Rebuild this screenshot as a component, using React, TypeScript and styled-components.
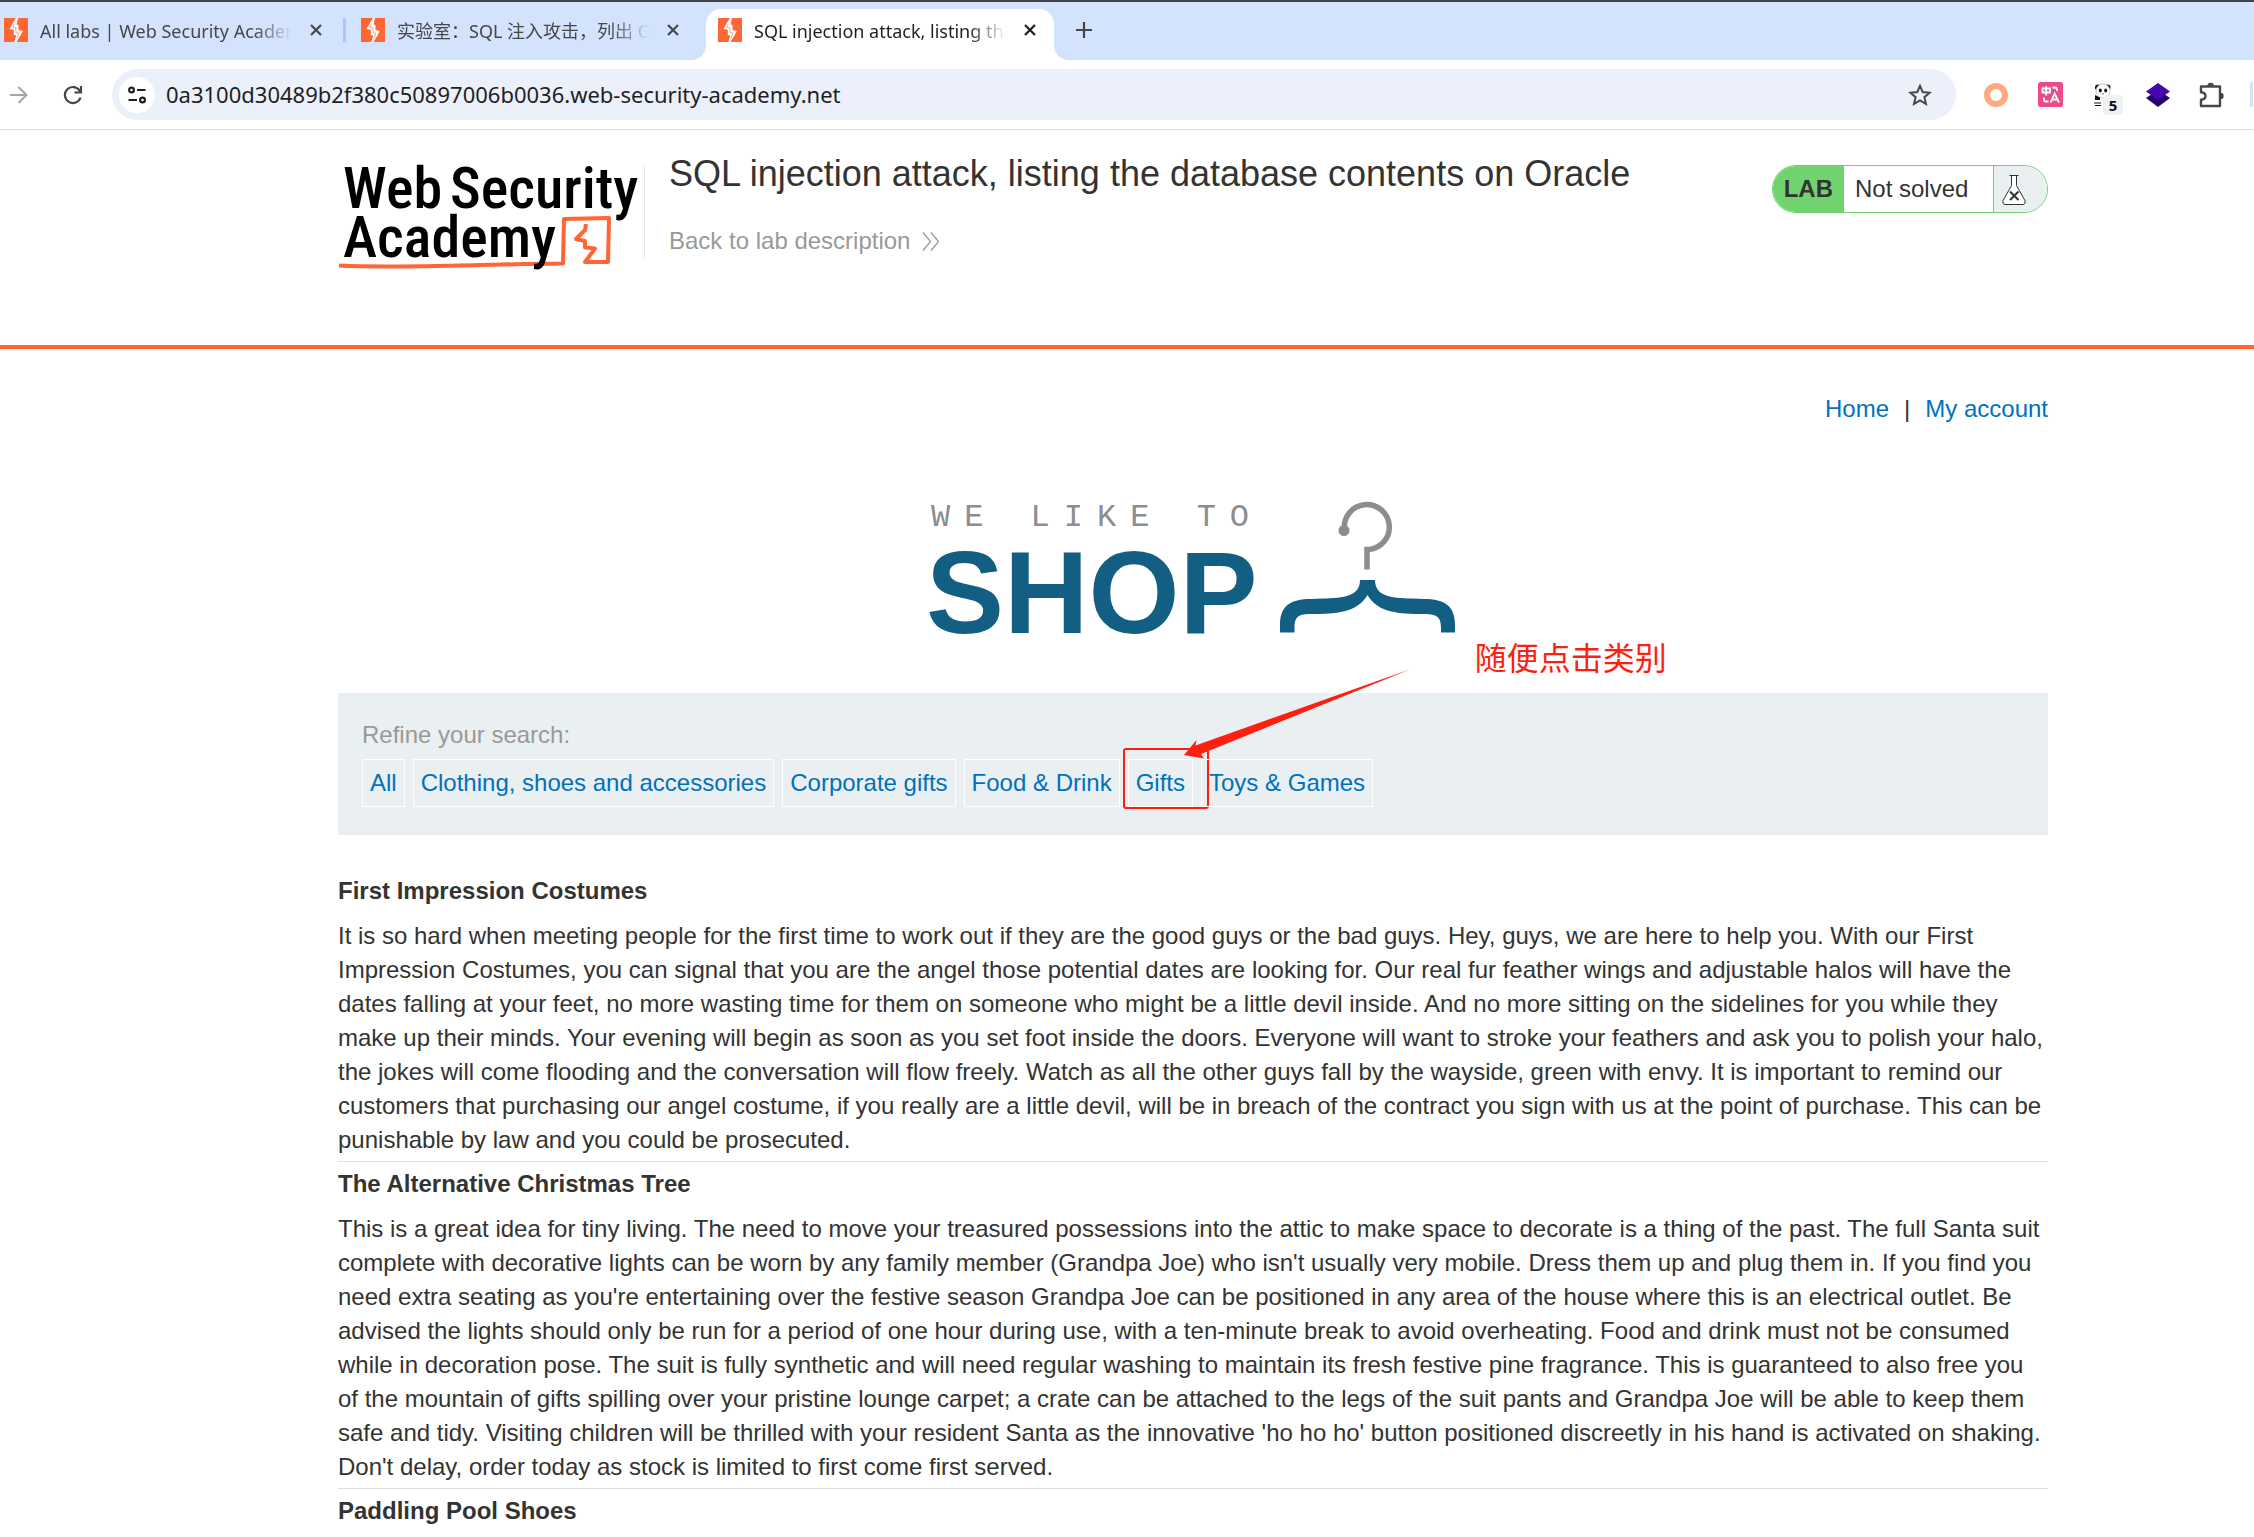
import React from "react";
import styled, { createGlobalStyle } from "styled-components";

const GlobalStyle = createGlobalStyle`
  *, *::before, *::after { box-sizing: border-box; }
  body {
    margin: 0;
    background: #fff;
    color: #333332;
    font-family: "Liberation Sans", Arial, "Noto Sans CJK SC", sans-serif;
    font-size: 24px;
    line-height: 34px;
  }
  h1, h2, p, ul { margin: 0; padding: 0; }
  button {
    margin: 0;
    padding: 0;
    border: 0;
    background: none;
    color: inherit;
    font: inherit;
    cursor: pointer;
  }
  svg { display: block; }
`;

const uiFont = `"Noto Sans", "Noto Sans CJK SC", sans-serif`;

/* ---------- Browser chrome ---------- */

const TabStrip = styled.div`
  display: flex;
  align-items: flex-end;
  height: 60px;
  border-top: 2px solid #404145;
  background: #d3e2fd;
  overflow: hidden;
`;

const Tab = styled.div<{ $active?: boolean; $clipped?: boolean }>`
  position: relative;
  display: flex;
  align-items: center;
  flex: none;
  width: ${(p) => (p.$clipped ? 340 : 348)}px;
  height: 51px;
  padding: 0 12px 9px ${(p) => (p.$clipped ? 4 : 12)}px;
  border-radius: 15px 15px 0 0;
  background: ${(p) => (p.$active ? "#fff" : "transparent")};
  color: ${(p) => (p.$active ? "#1f1f1f" : "#474747")};

  &::before,
  &::after {
    content: "";
    display: ${(p) => (p.$active ? "block" : "none")};
    position: absolute;
    bottom: 0;
    width: 15px;
    height: 15px;
  }
  &::before {
    right: 100%;
    background: radial-gradient(circle at 0 0, transparent 15px, #fff 15px);
  }
  &::after {
    left: 100%;
    background: radial-gradient(circle at 100% 0, transparent 15px, #fff 15px);
  }
`;

const TabTitle = styled.button`
  flex: 1;
  min-width: 0;
  margin: 2px 12px 0 12px;
  overflow: hidden;
  text-align: left;
  white-space: nowrap;
  font: 18px/26px ${uiFont};
  mask-image: linear-gradient(to right, #000 85%, transparent);
`;

const TabGap = styled.span<{ $line?: boolean }>`
  flex: none;
  width: 3px;
  height: 24px;
  margin: 0 3px 18px;
  background: ${(p) => (p.$line ? "#a8c7fa" : "transparent")};
`;

const CloseButton = styled.button`
  display: grid;
  place-items: center;
  width: 24px;
  height: 24px;
`;

const NewTabButton = styled.button`
  display: grid;
  place-items: center;
  width: 36px;
  height: 36px;
  margin: 0 0 12px 12px;
  color: #474747;
`;

const Toolbar = styled.div`
  display: flex;
  align-items: center;
  height: 70px;
  padding-left: 6px;
  border-bottom: 1px solid #dddddd;
  overflow: hidden;
`;

const ToolButton = styled.button<{ $muted?: boolean }>`
  display: grid;
  place-items: center;
  flex: none;
  width: 26px;
  height: 26px;
  color: ${(p) => (p.$muted ? "#a5a5a5" : "#474747")};
`;

const ReloadButton = styled(ToolButton)`
  margin: 0 26px 0 28px;
`;

const AddressBar = styled.div`
  display: flex;
  align-items: center;
  flex: 1;
  min-width: 0;
  height: 51px;
  padding: 0 23px 0 7px;
  border-radius: 26px;
  background: #ebf0fa;
`;

const SiteInfo = styled.button`
  display: grid;
  place-items: center;
  flex: none;
  width: 36px;
  height: 36px;
  border-radius: 50%;
  background: #fff;
`;

const AddressInput = styled.input`
  flex: 1;
  min-width: 0;
  margin: 0 11px;
  padding: 0 0 2px;
  border: 0;
  outline: 0;
  background: none;
  color: #1f1f1f;
  font: 22px/30px ${uiFont};
`;

const Extensions = styled.div`
  display: flex;
  align-items: center;
  flex: none;
  gap: 28px;
  padding: 0 1px 0 27px;
`;

const ExtensionDivider = styled.span`
  width: 3px;
  height: 25px;
  margin-left: -3px;
  background: #d3e3fd;
`;

const BadgedExtension = styled(ToolButton)`
  position: relative;
`;

const CountBadge = styled.span`
  position: absolute;
  left: 12px;
  top: 13px;
  width: 20px;
  height: 20px;
  border-radius: 4px;
  background: #f1f1f1;
  color: #111;
  text-align: center;
  font: 700 15px/20px ${uiFont};
`;

/* ---------- Page ---------- */

const Container = styled.div`
  max-width: 1710px;
  margin: 0 206px 0 auto;
`;

const Header = styled.header`
  border-bottom: 4px solid #ff6633;
`;

const HeaderRow = styled(Container)`
  display: flex;
  align-items: flex-start;
  padding: 23px 0 87px;
`;

const LogoLink = styled.a`
  flex: none;
  margin-top: 12px;
  padding-right: 6px;
  border-right: 1px solid #e5e5e5;
`;

const TitleBlock = styled.div`
  flex: 1;
  padding-left: 24px;
`;

const Title = styled.h1`
  margin-bottom: 29px;
  font-size: 36px;
  line-height: 42px;
  font-weight: 400;
`;

const BackLink = styled.a`
  display: inline-flex;
  align-items: center;
  gap: 12px;
  color: #999;
  text-decoration: none;
`;

const Badge = styled.div`
  display: flex;
  flex: none;
  height: 48px;
  margin-top: 12px;
  border: 1px solid #71d36f;
  border-radius: 24px;
  overflow: hidden;
  line-height: 46px;
`;

const BadgeName = styled.strong`
  padding: 0 11px;
  background: #71d36f;
`;

const BadgeStatus = styled.span`
  width: 149px;
  padding-left: 11px;
`;

const BadgeIcon = styled.span`
  width: 54px;
  padding: 8px 0 0 8px;
  border-left: 1px solid #71d36f;
  background: #eaeff2;
`;

const TopNav = styled.nav`
  display: flex;
  justify-content: flex-end;
  gap: 15px;
  padding-top: 43px;
`;

const Link = styled.a`
  color: #0071bd;
  text-decoration: none;
`;

const Banner = styled.section`
  display: flex;
  justify-content: center;
  padding: 77px 0 60px;
`;

const Filters = styled.section`
  padding: 25px 24px 28px;
  background: #eaeff2;
`;

const FilterLabel = styled.p`
  margin-bottom: 7px;
  color: #999;
`;

const FilterList = styled.ul`
  display: flex;
  gap: 8px;
  list-style: none;
`;

const FilterItem = styled.li`
  position: relative;
`;

const FilterLink = styled(Link)`
  display: block;
  padding: 6px 7px;
  border: 1px solid #fff;
`;

const HighlightBox = styled.span`
  position: absolute;
  left: -5px;
  top: -11px;
  width: 86px;
  height: 61px;
  border: 2px solid #ff1f10;
  border-radius: 3px;
  pointer-events: none;
`;

const ArrowMark = styled.svg`
  position: absolute;
  left: 56px;
  top: -91px;
  pointer-events: none;
`;

const NoteText = styled.span`
  position: absolute;
  left: 347px;
  top: -125px;
  color: #ff1f10;
  white-space: nowrap;
  font: 32px/44px "Noto Sans CJK SC", sans-serif;
`;

const Articles = styled.main`
  padding-top: 39px;
`;

const Article = styled.article`
  margin-bottom: 5px;
  padding-bottom: 4px;
  border-bottom: 1px solid #e0e0e0;

  &:last-child { border-bottom: 0; }
`;

const ArticleTitle = styled.h2`
  margin-bottom: 11px;
  font-size: 24px;
  line-height: 34px;
`;

/* ---------- Drawings ---------- */

const FaviconSvg = styled.svg`
  flex: none;
`;

const Favicon = () => (
  <FaviconSvg width="24" height="24" viewBox="0 0 24 24">
    <rect width="24" height="24" fill="#ff6633" />
    <path
      d="M11.8 0H14L12.600 6.500 14.500 7V12L19 13 12.500 24H10.300L12.300 17.500 9.800 17V11.800L5.500 11Z"
      fill="#fff"
    />
    <path d="M10.500 5.500 8.800 9.200 12 10V14.700L15 15.300 13 20" fill="none" stroke="#ff6633" strokeWidth=".6" />
  </FaviconSvg>
);

const Cross = () => (
  <svg width="12" height="12" viewBox="0 0 12 12" stroke="currentColor" strokeWidth="2.2">
    <path d="M1 1 11 11M11 1 1 11" />
  </svg>
);

const AcademyLogo = () => (
  <svg width="300" height="93" viewBox="0 0 300 93" overflow="visible" role="img" aria-label="Web Security Academy">
    <path
      d="M1 100.500C60 103.500 130 99.500 225 98.500L226 54 271 53 270 97H247L257 83.500 247 82.500V76L238 74 247 65 248 59"
      fill="none"
      stroke="#ff6633"
      strokeWidth="4"
      strokeLinejoin="round"
    />
    <g fill="#000" fontFamily="'Roboto Condensed', Roboto, sans-serif" fontWeight="500" fontSize="58">
      <text x="5" y="43">Web</text>
      <text x="112" y="43">Security</text>
      <text x="5" y="92">Academy</text>
    </g>
  </svg>
);

const ShopLogo = () => (
  <svg width="527" height="130" viewBox="930 503 527 130" overflow="visible" role="img" aria-label="We like to shop">
    <text x="931" y="526" fill="#8c8d8f" fontFamily="Liberation Mono, monospace" fontSize="32" letterSpacing="14">
      WE LIKE TO
    </text>
    <text x="926" y="633" fill="#125f83" fontFamily="Liberation Sans, Arial, sans-serif" fontWeight="700" fontSize="117">
      SHOP
    </text>
    <path d="M1344.500 530A22.500 22.500 0 1 1 1369 549.500H1367V569.500" fill="none" stroke="#8c8d8f" strokeWidth="5.500" />
    <circle cx="1344" cy="530.500" r="5.500" fill="#8c8d8f" />
    <path
      d="M1280 632.500V625C1280 606 1290 599 1311 599L1322 598.500C1345 598 1360 596 1360 580H1375C1375 596 1390 598 1412 598.500L1424 599C1445 599 1455 606 1455 625V632.500H1441V628C1441 616 1436 614 1422 614C1400 614 1378 613 1367.500 595C1357 613 1335 614 1312 614C1299 614 1294.500 616 1294.500 628V632.500Z"
      fill="#125f83"
    />
  </svg>
);

const Flask = () => (
  <svg width="24" height="31" viewBox="0 0 24 31" fill="#fff" stroke="#333332" strokeWidth="1">
    <path d="M7.500 1.500H16.500M9.500 1.500V11.500L.8 27Q.5 30.500 3 30.500H21Q23.500 30.500 23.200 27L14.500 11.500V1.500" />
    <path d="M8 17.500 16.500 26M16.500 17.500 8 26" strokeWidth="2" />
  </svg>
);

const TunePic = () => (
  <svg width="18" height="18" viewBox="0 0 18 18" fill="none" stroke="#1f1f1f" strokeWidth="2.200">
    <circle cx="3.500" cy="4" r="2.400" />
    <path d="M9 4H17.500M.5 14H9" />
    <circle cx="14.500" cy="14" r="2.400" />
  </svg>
);

const Puzzle = () => (
  <svg width="26" height="26" viewBox="0 0 26 26">
    <path
      d="M2 4.500H21V24H2V17.800Q6.500 17.500 6.500 14T2 10.200Z"
      fill="none"
      stroke="#474747"
      strokeWidth="2.400"
      strokeLinejoin="round"
    />
    <path d="M8.500 4a3.200 3.200 0 0 1 6.400 0ZM21.500 10.800a3.200 3.200 0 0 1 0 6.400Z" fill="#474747" />
  </svg>
);

/* ---------- Content ---------- */

const tabs = [
  { title: "All labs | Web Security Academy", clipped: true, line: true },
  { title: "实验室：SQL 注入攻击，列出 Oracle 上的数据库内容", line: false },
  { title: "SQL injection attack, listing the database contents on Oracle", active: true },
];

const filters = ["All", "Clothing, shoes and accessories", "Corporate gifts", "Food & Drink", "Gifts", "Toys & Games"];

const articles = [
  {
    title: "First Impression Costumes",
    body: "It is so hard when meeting people for the first time to work out if they are the good guys or the bad guys. Hey, guys, we are here to help you. With our First Impression Costumes, you can signal that you are the angel those potential dates are looking for. Our real fur feather wings and adjustable halos will have the dates falling at your feet, no more wasting time for them on someone who might be a little devil inside. And no more sitting on the sidelines for you while they make up their minds. Your evening will begin as soon as you set foot inside the doors. Everyone will want to stroke your feathers and ask you to polish your halo, the jokes will come flooding and the conversation will flow freely. Watch as all the other guys fall by the wayside, green with envy. It is important to remind our customers that purchasing our angel costume, if you really are a little devil, will be in breach of the contract you sign with us at the point of purchase. This can be punishable by law and you could be prosecuted.",
  },
  {
    title: "The Alternative Christmas Tree",
    body: "This is a great idea for tiny living. The need to move your treasured possessions into the attic to make space to decorate is a thing of the past. The full Santa suit complete with decorative lights can be worn by any family member (Grandpa Joe) who isn't usually very mobile. Dress them up and plug them in. If you find you need extra seating as you're entertaining over the festive season Grandpa Joe can be positioned in any area of the house where this is an electrical outlet. Be advised the lights should only be run for a period of one hour during use, with a ten-minute break to avoid overheating. Food and drink must not be consumed while in decoration pose. The suit is fully synthetic and will need regular washing to maintain its fresh festive pine fragrance. This is guaranteed to also free you of the mountain of gifts spilling over your pristine lounge carpet; a crate can be attached to the legs of the suit pants and Grandpa Joe will be able to keep them safe and tidy. Visiting children will be thrilled with your resident Santa as the innovative 'ho ho ho' button positioned discreetly in his hand is activated on shaking. Don't delay, order today as stock is limited to first come first served.",
  },
  { title: "Paddling Pool Shoes", body: "" },
];

export default function App() {
  return (
    <>
      <GlobalStyle />
      <TabStrip>
        {tabs.map((tab) => (
          <React.Fragment key={tab.title}>
            <Tab $active={tab.active} $clipped={tab.clipped}>
              <Favicon />
              <TabTitle>{tab.title}</TabTitle>
              <CloseButton aria-label="Close tab">
                <Cross />
              </CloseButton>
            </Tab>
            {!tab.active && <TabGap $line={tab.line} />}
          </React.Fragment>
        ))}
        <NewTabButton aria-label="New tab">
          <svg width="16" height="16" viewBox="0 0 16 16" stroke="currentColor" strokeWidth="2.200">
            <path d="M8 0V16M0 8H16" />
          </svg>
        </NewTabButton>
      </TabStrip>

      <Toolbar>
        <ToolButton $muted aria-label="Forward">
          <svg width="18" height="18" viewBox="0 0 18 18" fill="none" stroke="currentColor" strokeWidth="2">
            <path d="M0 9H16.500M8.500 1 16.500 9 8.500 17" />
          </svg>
        </ToolButton>
        <ReloadButton aria-label="Reload">
          <svg width="20" height="20" viewBox="0 0 20 20" fill="none" stroke="currentColor" strokeWidth="2.200">
            <path d="M17.500 12.500A8 8 0 1 1 16.500 5.500L18 7.500M18 1V7.500H11.500" />
          </svg>
        </ReloadButton>
        <AddressBar>
          <SiteInfo aria-label="Site information">
            <TunePic />
          </SiteInfo>
          <AddressInput
            aria-label="Address"
            readOnly
            value="0a3100d30489b2f380c50897006b0036.web-security-academy.net"
          />
          <ToolButton aria-label="Bookmark this page">
            <svg width="24" height="24" viewBox="0 0 24 24" fill="none" stroke="currentColor" strokeWidth="2">
              <path d="M12 2.800 14.700 9.100 21.600 9.700 16.400 14.200 18 21 12 17.400 6 21 7.600 14.200 2.400 9.700 9.300 9.100Z" />
            </svg>
          </ToolButton>
        </AddressBar>
        <Extensions>
          <ToolButton aria-label="Recorder">
            <svg width="24" height="24" viewBox="0 0 24 24">
              <circle cx="12" cy="12" r="9" fill="#fff" stroke="#ffa980" strokeWidth="6" />
            </svg>
          </ToolButton>
          <ToolButton aria-label="Translate">
            <svg width="25" height="25" viewBox="0 0 25 25" fill="none" stroke="#fff" strokeWidth="1.800">
              <rect width="25" height="25" rx="2.500" fill="#ec4a8a" stroke="none" />
              <path d="M4.500 6.500H12V10.500H4.500ZM8.200 4V13.500M14.500 5.500H17Q19 5.500 19 8V9M6 15.500V17.500Q6 19.500 8 19.500H10.500M12.500 20.500 16.700 11.500 21 20.500M14 17.500H19.500" />
            </svg>
          </ToolButton>
          <BadgedExtension aria-label="Panda, 5 items">
            <svg width="26" height="26" viewBox="0 0 26 26" fill="#111">
              <circle cx="7" cy="5.500" r="3" />
              <circle cx="16.500" cy="5.500" r="3" />
              <circle cx="12" cy="9" r="7" fill="#fff" stroke="#bbb" strokeWidth=".8" />
              <ellipse cx="9.300" cy="8.500" rx="1.500" ry="1.900" />
              <ellipse cx="14.700" cy="8.500" rx="1.500" ry="1.900" />
              <path d="M11 11.500h2l-1 1.200ZM4 13 9 15.500V18H4ZM3 20.500H10V21.500H3ZM4 23H10V24H4Z" />
            </svg>
            <CountBadge>5</CountBadge>
          </BadgedExtension>
          <ToolButton aria-label="Layers">
            <svg width="26" height="26" viewBox="0 0 26 26">
              <path d="M1 16 13 8 25 16 13 25Z" fill="#22036e" />
              <path d="M1 9.500 13 1 25 9.500 13 18Z" fill="#4608ad" />
            </svg>
          </ToolButton>
          <ToolButton aria-label="Extensions">
            <Puzzle />
          </ToolButton>
          <ExtensionDivider />
        </Extensions>
      </Toolbar>

      <Header>
        <HeaderRow>
          <LogoLink href="#academy">
            <AcademyLogo />
          </LogoLink>
          <TitleBlock>
            <Title>SQL injection attack, listing the database contents on Oracle</Title>
            <BackLink href="#description">
              Back to lab description
              <svg width="18" height="19" viewBox="0 0 18 19" fill="none" stroke="#999" strokeWidth="1.300">
                <path d="M1 .5 8.500 9.500 1 18.500M9 .5 16.500 9.500 9 18.500" />
              </svg>
            </BackLink>
          </TitleBlock>
          <Badge>
            <BadgeName>LAB</BadgeName>
            <BadgeStatus>Not solved</BadgeStatus>
            <BadgeIcon>
              <Flask />
            </BadgeIcon>
          </Badge>
        </HeaderRow>
      </Header>

      <Container>
        <TopNav>
          <Link href="#home">Home</Link>
          <span>|</span>
          <Link href="#account">My account</Link>
        </TopNav>
        <Banner>
          <ShopLogo />
        </Banner>
        <Filters>
          <FilterLabel>Refine your search:</FilterLabel>
          <FilterList>
            {filters.map((name) => (
              <FilterItem key={name}>
                <FilterLink href={"#" + encodeURIComponent(name)}>{name}</FilterLink>
                {name === "Gifts" && (
                  <>
                    <HighlightBox />
                    <ArrowMark width="228" height="92" viewBox="0 0 228 92" fill="#ff1f10">
                      <path d="M0 87 12.500 72 11.500 77.500 227 1 17 86 20 90.500Z" />
                    </ArrowMark>
                    <NoteText>随便点击类别</NoteText>
                  </>
                )}
              </FilterItem>
            ))}
          </FilterList>
        </Filters>
        <Articles>
          {articles.map((article) => (
            <Article key={article.title}>
              <ArticleTitle>{article.title}</ArticleTitle>
              {article.body && <p>{article.body}</p>}
            </Article>
          ))}
        </Articles>
      </Container>
    </>
  );
}
